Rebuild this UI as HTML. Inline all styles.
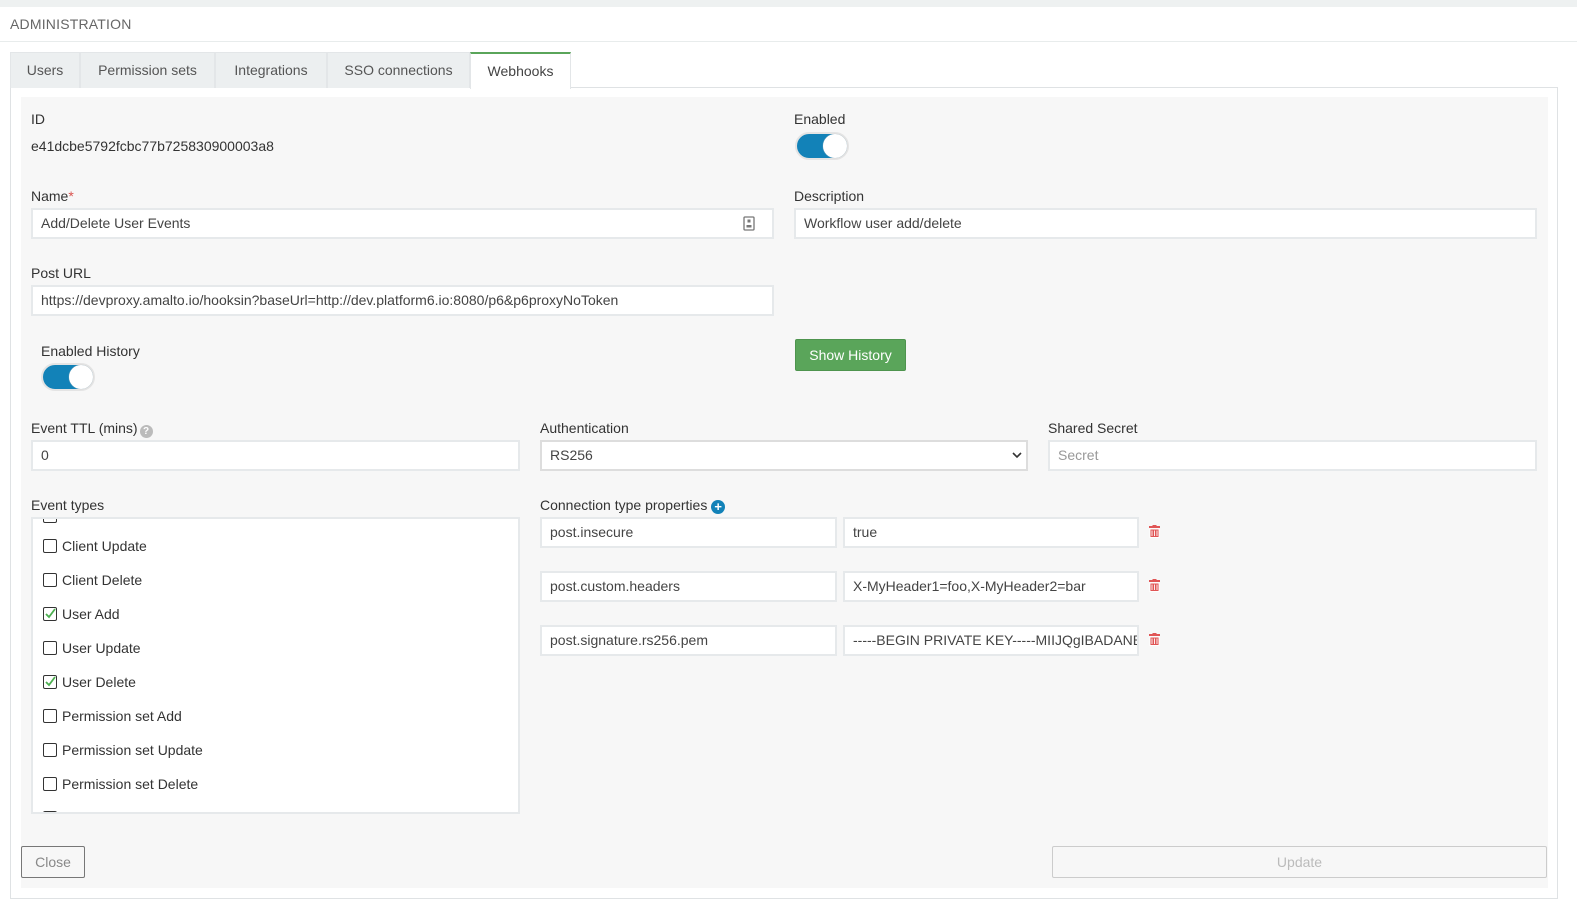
<!DOCTYPE html>
<html style="overflow:hidden"><head><meta charset="utf-8"><style>
*{box-sizing:border-box;margin:0;padding:0}
html,body{width:1577px;height:913px;overflow:hidden}
body{background:#fff;font-family:"Liberation Sans",sans-serif;font-size:14px;color:#333;position:relative}
.a{position:absolute}
.top{left:0;top:0;width:1577px;height:7px;background:#eef1f1}
.hdr{left:10px;top:16px;font-size:14px;color:#666;letter-spacing:.2px}
.hl{left:0;top:41px;width:1577px;height:1px;background:#e8ecec}
.tab{top:52px;height:36px;background:#eceff0;border:1px solid #e3e6e8;border-bottom:none;color:#555;font-size:14px;text-align:center;line-height:34px}
.tab.act{background:#fff;border-top:2px solid #5aa55a;height:37px;color:#444}
.outer{left:10px;top:87px;width:1548px;height:812px;border:1px solid #dfe2e4;background:#fff}
.inner{left:21px;top:97px;width:1527px;height:791px;background:#f7f7f7}
.lbl{font-size:14px;color:#333}
.inp{background:#fff;border:2px solid #e6e9eb;height:31px;padding-left:8px;line-height:27px;font-size:14px;color:#444;white-space:nowrap;overflow:hidden}
.tg{width:54px;height:28px;border-radius:14px;background:#1282b8;border:2px solid #e4e4e4}
.tg::after{content:"";position:absolute;right:0;top:0;width:24px;height:24px;border-radius:50%;background:#fff;box-shadow:0 0 1px #bbb}
.cb{width:14px;height:14px;border:1.5px solid #333;border-radius:2px;background:#fff}
.item{left:43px;font-size:14px;color:#333;height:20px;line-height:20px}
.item .cb{display:inline-block;vertical-align:-2px;margin-right:5px}
.trash{width:11px;height:13px}
</style></head><body>
<div class="a top"></div>
<div class="a hdr">ADMINISTRATION</div>
<div class="a hl"></div>
<div class="a outer"></div>
<div class="a tab" style="left:10px;width:70px">Users</div>
<div class="a tab" style="left:80px;width:135px">Permission sets</div>
<div class="a tab" style="left:215px;width:112px">Integrations</div>
<div class="a tab" style="left:327px;width:143px">SSO connections</div>
<div class="a tab act" style="left:470px;width:101px">Webhooks</div>
<div class="a inner"></div>

<div class="a lbl" style="left:31px;top:111px">ID</div>
<div class="a lbl" style="left:31px;top:138px">e41dcbe5792fcbc77b725830900003a8</div>
<div class="a lbl" style="left:794px;top:111px">Enabled</div>
<div class="a tg" style="left:795px;top:132px"></div>

<div class="a lbl" style="left:31px;top:188px">Name<span style="color:#d9534f">*</span></div>
<div class="a inp" style="left:31px;top:208px;width:743px">Add/Delete User Events</div>
<svg class="a" style="left:743px;top:216px" width="12" height="15" viewBox="0 0 12 15"><rect x="1" y="1" width="10" height="13" rx="1" fill="none" stroke="#777" stroke-width="1.3"/><rect x="4.5" y="3.5" width="3" height="3" fill="#777"/><rect x="3.5" y="9" width="5" height="2.5" fill="#777"/></svg>
<div class="a lbl" style="left:794px;top:188px">Description</div>
<div class="a inp" style="left:794px;top:208px;width:743px">Workflow user add/delete</div>

<div class="a lbl" style="left:31px;top:265px">Post URL</div>
<div class="a inp" style="left:31px;top:285px;width:743px">https://devproxy.amalto.io/hooksin?baseUrl=http://dev.platform6.io:8080/p6&amp;p6proxyNoToken</div>

<div class="a lbl" style="left:41px;top:343px">Enabled History</div>
<div class="a tg" style="left:41px;top:363px"></div>
<div class="a" style="left:795px;top:339px;width:111px;height:32px;background:#5aa55a;border:1px solid #4e944e;border-radius:2px;color:#fff;text-align:center;line-height:30px;font-size:14px">Show History</div>

<div class="a lbl" style="left:31px;top:420px">Event TTL (mins)<span style="display:inline-block;width:13px;height:13px;border-radius:50%;background:#bbb;color:#fff;font-size:10px;line-height:13px;text-align:center;font-weight:bold;margin-left:2px;vertical-align:-1px">?</span></div>
<div class="a inp" style="left:31px;top:440px;width:489px">0</div>
<div class="a lbl" style="left:540px;top:420px">Authentication</div>
<div class="a inp" style="left:540px;top:440px;width:488px;border-color:#ddd">RS256</div>
<svg class="a" style="left:1012px;top:451px" width="10" height="8" viewBox="0 0 10 8"><path d="M1 2l4 4 4-4" fill="none" stroke="#333" stroke-width="1.6"/></svg>
<div class="a lbl" style="left:1048px;top:420px">Shared Secret</div>
<div class="a inp" style="left:1048px;top:440px;width:489px;color:#999">Secret</div>

<div class="a lbl" style="left:31px;top:497px">Event types</div>
<div class="a" style="left:31px;top:517px;width:489px;height:297px;background:#fff;border:2px solid #e6e9eb;overflow:hidden">
<div class="a cb" style="left:10px;top:-10px"></div>
<div class="a item" style="left:10px;top:17px"><span class="cb"></span>Client Update</div>
<div class="a item" style="left:10px;top:51px"><span class="cb"></span>Client Delete</div>
<div class="a item" style="left:10px;top:85px"><span class="cb" style="position:relative"><svg style="position:absolute;left:0;top:-1px" width="13" height="13" viewBox="0 0 13 13"><path d="M2 7l3 3 6-8" fill="none" stroke="#4caf50" stroke-width="1.8"/></svg></span>User Add</div>
<div class="a item" style="left:10px;top:119px"><span class="cb"></span>User Update</div>
<div class="a item" style="left:10px;top:153px"><span class="cb" style="position:relative"><svg style="position:absolute;left:0;top:-1px" width="13" height="13" viewBox="0 0 13 13"><path d="M2 7l3 3 6-8" fill="none" stroke="#4caf50" stroke-width="1.8"/></svg></span>User Delete</div>
<div class="a item" style="left:10px;top:187px"><span class="cb"></span>Permission set Add</div>
<div class="a item" style="left:10px;top:221px"><span class="cb"></span>Permission set Update</div>
<div class="a item" style="left:10px;top:255px"><span class="cb"></span>Permission set Delete</div>
<div class="a item" style="left:10px;top:289px"><span class="cb"></span>Instance Add</div>
</div>

<div class="a lbl" style="left:540px;top:497px">Connection type properties <span style="display:inline-block;width:14px;height:14px;border-radius:50%;background:#1282b8;color:#fff;font-size:13px;line-height:14px;text-align:center;font-weight:bold;vertical-align:-1px">+</span></div>
<div class="a inp" style="left:540px;top:517px;width:297px">post.insecure</div>
<div class="a inp" style="left:843px;top:517px;width:296px">true</div>
<div class="a inp" style="left:540px;top:571px;width:297px">post.custom.headers</div>
<div class="a inp" style="left:843px;top:571px;width:296px">X-MyHeader1=foo,X-MyHeader2=bar</div>
<div class="a inp" style="left:540px;top:625px;width:297px">post.signature.rs256.pem</div>
<div class="a inp" style="left:843px;top:625px;width:296px">-----BEGIN PRIVATE KEY-----MIIJQgIBADANBgkqh</div>
<svg class="a trash" style="left:1149px;top:525px" viewBox="0 0 11 13"><rect x="0" y="1" width="11" height="2" fill="#e05555"/><rect x="3.5" y="0" width="4" height="1.5" fill="#e05555"/><path d="M1 4h9v8.5H1z M3 5.5v5.5 M5.5 5.5v5.5 M8 5.5v5.5" fill="#e05555" stroke="#fff" stroke-width="0.9"/></svg>
<svg class="a trash" style="left:1149px;top:579px" viewBox="0 0 11 13"><rect x="0" y="1" width="11" height="2" fill="#e05555"/><rect x="3.5" y="0" width="4" height="1.5" fill="#e05555"/><path d="M1 4h9v8.5H1z M3 5.5v5.5 M5.5 5.5v5.5 M8 5.5v5.5" fill="#e05555" stroke="#fff" stroke-width="0.9"/></svg>
<svg class="a trash" style="left:1149px;top:633px" viewBox="0 0 11 13"><rect x="0" y="1" width="11" height="2" fill="#e05555"/><rect x="3.5" y="0" width="4" height="1.5" fill="#e05555"/><path d="M1 4h9v8.5H1z M3 5.5v5.5 M5.5 5.5v5.5 M8 5.5v5.5" fill="#e05555" stroke="#fff" stroke-width="0.9"/></svg>

<div class="a" style="left:21px;top:846px;width:64px;height:32px;border:1px solid #777;border-radius:2px;color:#888;text-align:center;line-height:30px">Close</div>
<div class="a" style="left:1052px;top:846px;width:495px;height:32px;border:1px solid #ccc;border-radius:2px;color:#bbb;text-align:center;line-height:30px">Update</div>
</body></html>
